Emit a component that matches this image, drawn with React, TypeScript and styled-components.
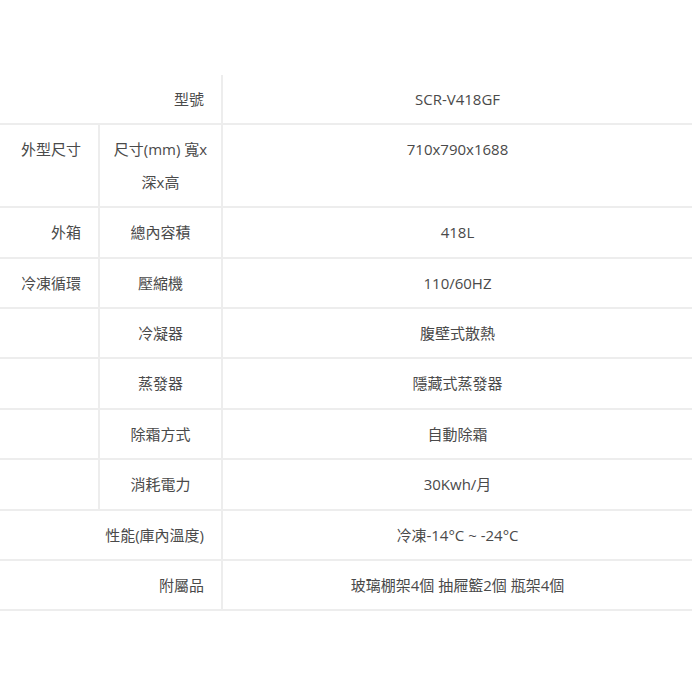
import React from "react";
import styled, { createGlobalStyle } from "styled-components";

const Global = createGlobalStyle`
  html, body { margin: 0; padding: 0; background: #fff; }
  body { font-family: "Open Sans", "Noto Sans CJK TC", sans-serif; }
`;

const Page = styled.div`
  padding-top: 75px;
  width: 692px;
`;

const Table = styled.table`
  width: 692px;
  border-collapse: collapse;
  table-layout: fixed;
  font-size: 15px;
  color: #4a4a4a;
`;

const Row = styled.tr`
  border-bottom: 2px solid #ededed;
`;

const Cell = styled.td<{ $align: "left" | "center" | "right"; $divider?: boolean }>`
  text-align: ${(p) => p.$align};
  vertical-align: top;
  line-height: 32.4px;
  padding: ${(p) => (p.$align === "right" ? "8px 17px 8px 6px" : "8px 8px")};
  border-right: ${(p) => (p.$divider ? "2px solid #ededed" : "none")};
  word-break: normal;
`;

type RowData =
  | { kind: "span"; label: string; value: string }
  | { kind: "pair"; group: string; label: string; value: string };

const rows: RowData[] = [
  { kind: "span", label: "型號", value: "SCR-V418GF" },
  { kind: "pair", group: "外型尺寸", label: "尺寸(mm) 寬x深x高", value: "710x790x1688" },
  { kind: "pair", group: "外箱", label: "總內容積", value: "418L" },
  { kind: "pair", group: "冷凍循環", label: "壓縮機", value: "110/60HZ" },
  { kind: "pair", group: "", label: "冷凝器", value: "腹壁式散熱" },
  { kind: "pair", group: "", label: "蒸發器", value: "隱藏式蒸發器" },
  { kind: "pair", group: "", label: "除霜方式", value: "自動除霜" },
  { kind: "pair", group: "", label: "消耗電力", value: "30Kwh/月" },
  { kind: "span", label: "性能(庫內溫度)", value: "冷凍-14°C ~ -24°C" },
  { kind: "span", label: "附屬品", value: "玻璃棚架4個 抽屜籃2個 瓶架4個" },
];

export default function App() {
  return (
    <>
      <Global />
      <Page>
        <Table>
          <colgroup>
            <col style={{ width: 99 }} />
            <col style={{ width: 123 }} />
            <col />
          </colgroup>
          <tbody>
            {rows.map((r, i) =>
              r.kind === "span" ? (
                <Row key={i}>
                  <Cell colSpan={2} $align="right" $divider>
                    {r.label}
                  </Cell>
                  <Cell $align="center">{r.value}</Cell>
                </Row>
              ) : (
                <Row key={i}>
                  <Cell $align="right" $divider>
                    {r.group}
                  </Cell>
                  <Cell $align="center" $divider>
                    {r.label}
                  </Cell>
                  <Cell $align="center">{r.value}</Cell>
                </Row>
              )
            )}
          </tbody>
        </Table>
      </Page>
    </>
  );
}
